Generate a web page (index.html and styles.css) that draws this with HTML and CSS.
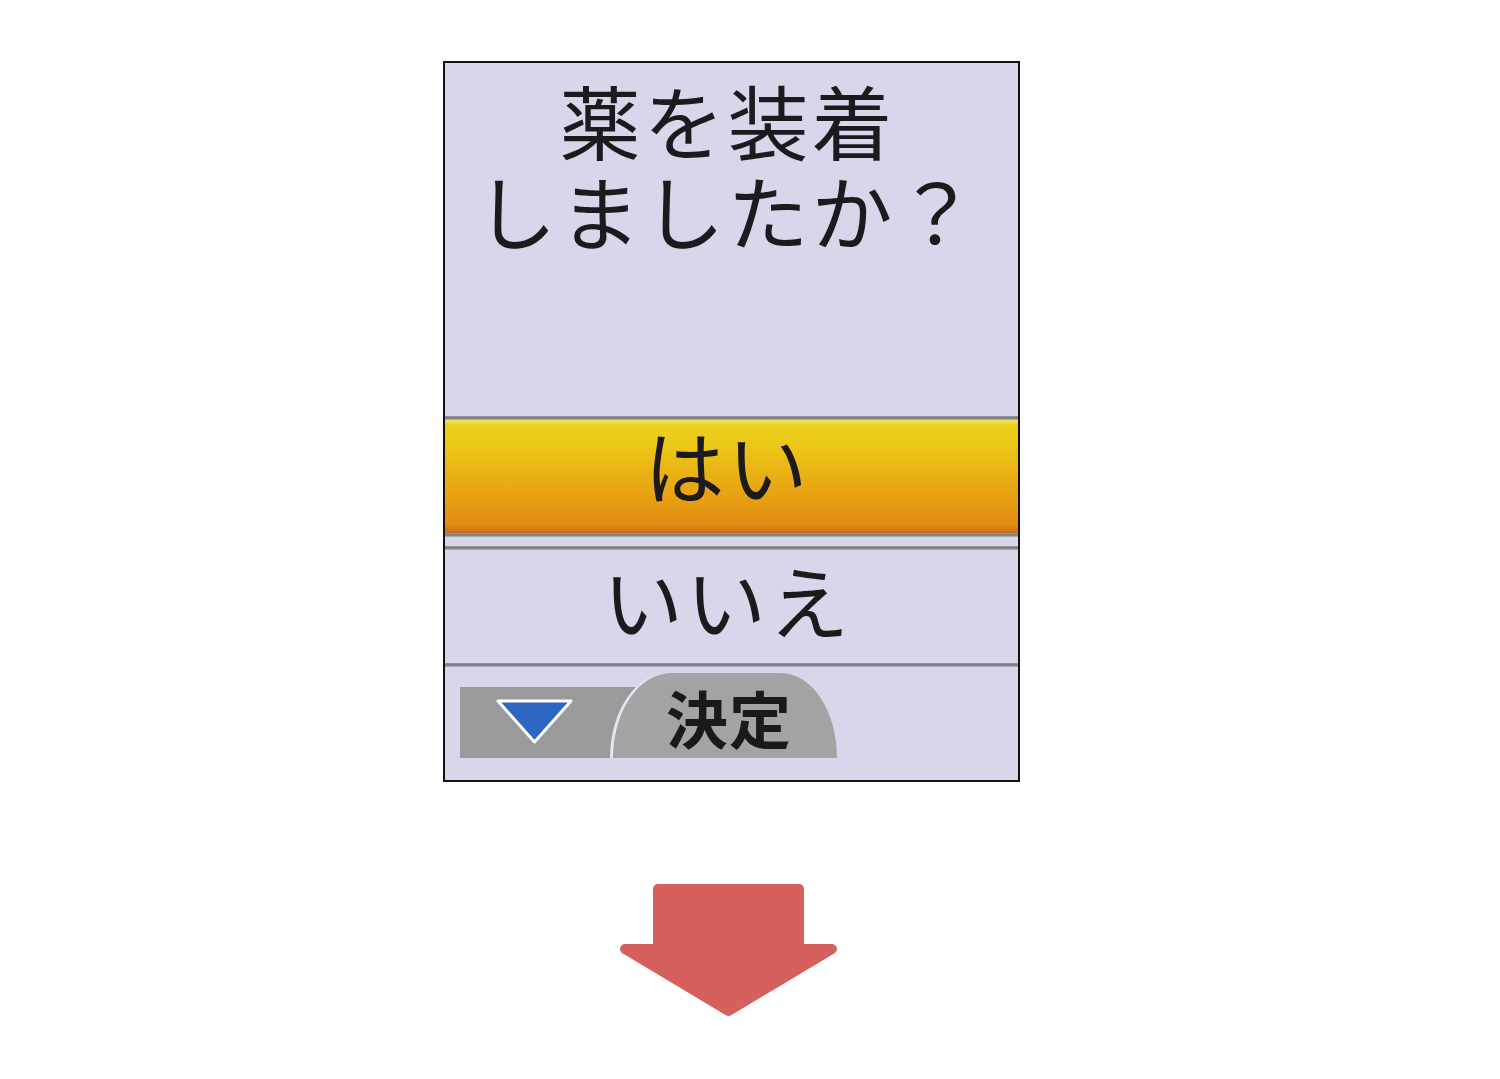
FILE: index.html
```html
<!DOCTYPE html>
<html lang="ja">
<head>
  <meta charset="UTF-8">
  <title>薬を装着しましたか？</title>
  <link rel="stylesheet" href="styles.css">
</head>
<body>
<div class="page">
  <div class="screen">
    <div class="question">
      <p>薬を装着<br>しましたか？</p>
    </div>

    <div class="rule"></div>
    <div class="choice selected">はい</div>
    <div class="rule"></div>
    <div class="gap"></div>
    <div class="rule"></div>
    <div class="choice plain">いいえ</div>
    <div class="rule"></div>

    <div class="softkeys">
      <div class="key_down">
        <svg width="79" height="48" viewBox="0 0 79 48">
          <polygon points="3,3 76,3 39.5,44" fill="#2e67c2" stroke="#fff" stroke-width="3" stroke-linejoin="round"/>
        </svg>
      </div>
      <div class="key_ok">決定</div>
    </div>
  </div>

  <div class="next">
    <svg width="217" height="133" viewBox="0 0 217 133">
      <path d="M38,5 H179 V65 H212 L108.5,127 L5,65 H38 Z" fill="#d6605d" stroke="#d6605d" stroke-width="10" stroke-linejoin="round"/>
    </svg>
  </div>
</div>
</body>
</html>
```

FILE: styles.css
```css
* {
  box-sizing: border-box;
}

body {
  background: white;
  font-family: "Noto Sans CJK JP", "Noto Sans", sans-serif;
  margin: 0;
  padding: 0;
}

.page {
  display: flex;
  flex-direction: column;
  padding: 61px 0 0 443px;
}

.screen {
  width: 577px;
  height: 721px;
  border: 2px solid #111;
  background: #d8d6ea;
  display: flex;
  flex-direction: column;
}

.question {
  height: 353px;
  padding: 11px 8px 0 0;
  color: #1c1a1c;
  text-align: center;
}

.question p {
  margin: 0;
  font-size: 81px;
  line-height: 90px;
  letter-spacing: 3px;
}

.rule {
  height: 4px;
  background: linear-gradient(#9c9ca4 0, #7c7c80 40%, #8a8a92 75%, #c4c2d4 100%);
}

.choice {
  height: 113px;
  padding-right: 8px;
  color: #1c1a1c;
  font-size: 80px;
  text-align: center;
  letter-spacing: 3px;
}

.choice.selected {
  line-height: 86px;
  background: linear-gradient(#f3e27a 0, #ecd21e 4%, #ecc718 22%, #eab415 45%, #e79e12 72%, #e38a12 93%, #c8681a 100%);
}

.choice.plain {
  line-height: 96px;
}

.gap {
  height: 9px;
}

.softkeys {
  flex: 1;
  display: flex;
  align-items: flex-end;
  padding: 0 0 22px 15px;
}

.key_down {
  width: 187px;
  height: 71px;
  background: #9a9a9c;
  padding: 11px 0 0 35px;
}

.key_down svg {
  display: block;
}

.key_ok {
  width: 224px;
  height: 85px;
  margin-left: -34px;
  background: #a3a3a5;
  border-radius: 58px 56px 0 0 / 85px 85px 0 0;
  box-shadow: -3px 0 0 0 #e6e4f0;
  color: #1a1a1a;
  font-size: 62px;
  font-weight: bold;
  line-height: 88px;
  text-align: center;
  padding-left: 8px;
  letter-spacing: 1px;
}

.next {
  margin: 102px 0 0 177px;
}

.next svg {
  display: block;
}
```
